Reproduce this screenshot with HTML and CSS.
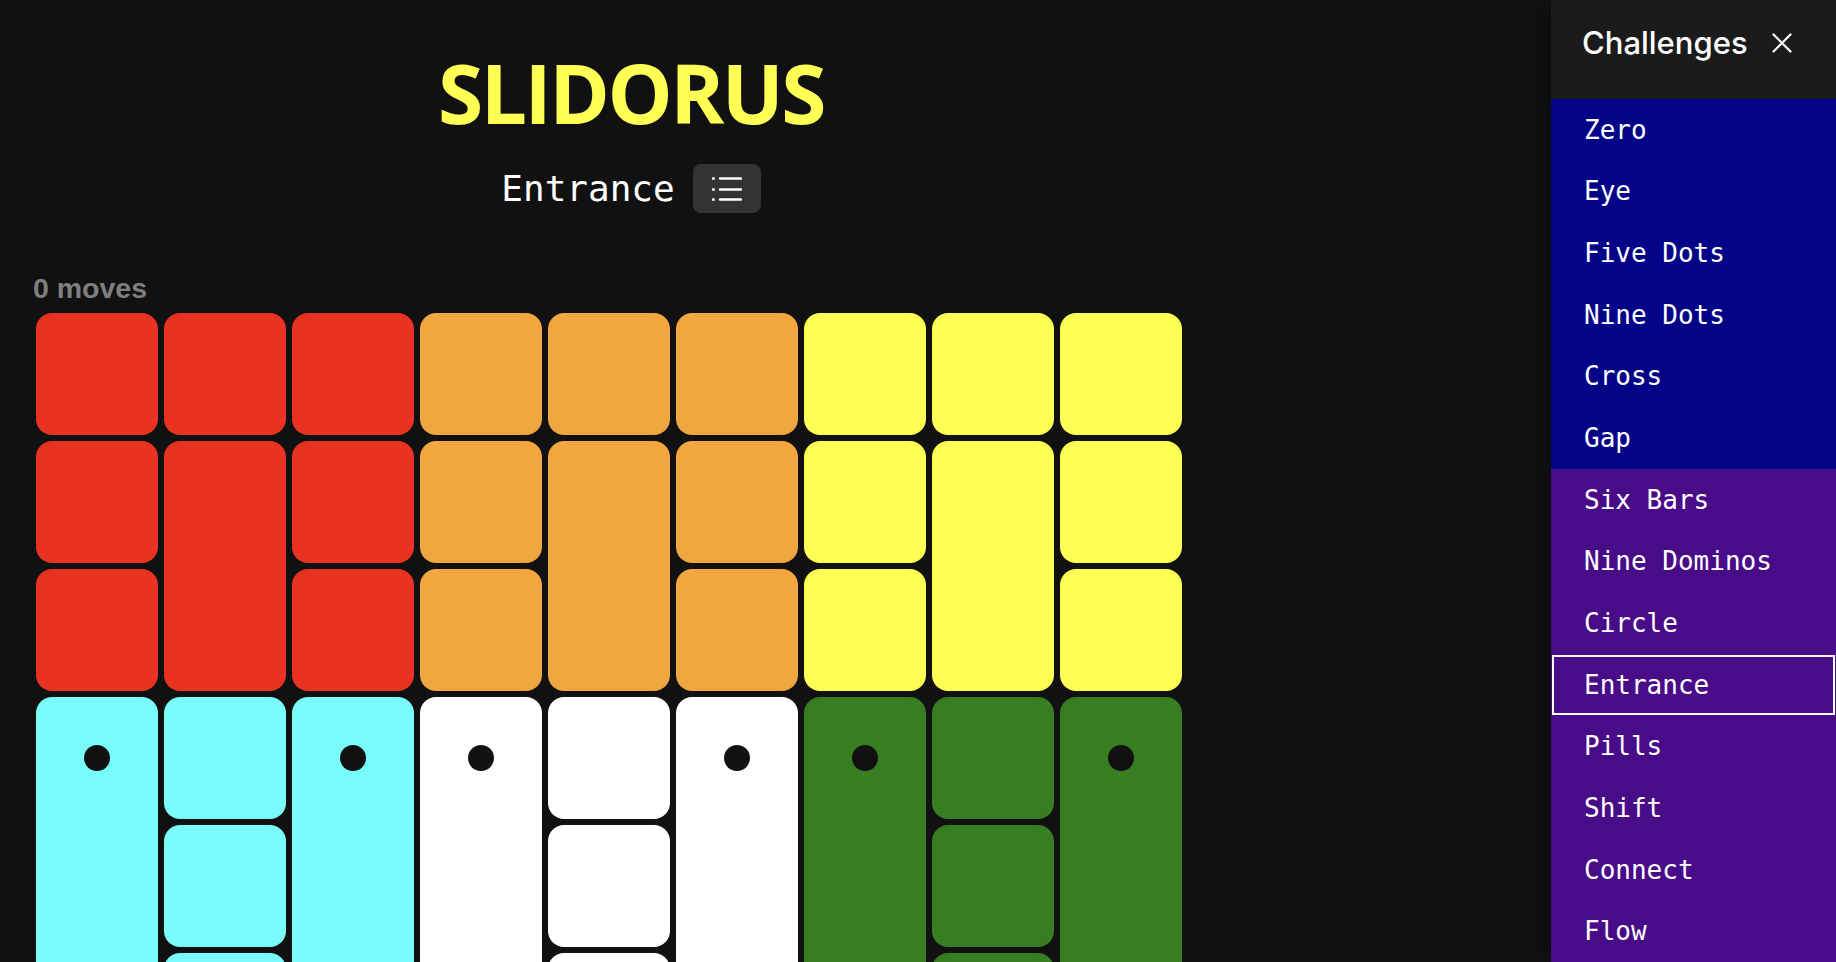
FILE: index.html
```html
<!DOCTYPE html>
<html lang="en">
<head>
<meta charset="utf-8">
<title>Slidorus</title>
<link rel="stylesheet" href="styles.css">
</head>
<body>
<main class="main">
  <header class="header">
    <h1 class="title">SLIDORUS</h1>
    <div class="subtitle">
      <span class="level-name">Entrance</span>
      <button class="list-btn" type="button" aria-label="Challenges">
        <svg width="30" height="24" viewBox="0 0 30 24">
          <g fill="#fff">
            <rect x="0" y="0.2" width="2.8" height="2.6" rx="0.6"/>
            <rect x="0" y="11.2" width="2.8" height="2.6" rx="0.6"/>
            <rect x="0" y="21.2" width="2.8" height="2.6" rx="0.6"/>
          </g>
          <g stroke="#fff" stroke-width="2.4" stroke-linecap="round">
            <line x1="8" y1="1.5" x2="29" y2="1.5"/>
            <line x1="8" y1="12.5" x2="29" y2="12.5"/>
            <line x1="8" y1="22.5" x2="29" y2="22.5"/>
          </g>
        </svg>
      </button>
    </div>
  </header>
  <div class="moves">0 moves</div>
  <div class="board">
    <div class="tile red"></div>
    <div class="tile red"></div>
    <div class="tile red"></div>
    <div class="tile orange"></div>
    <div class="tile orange"></div>
    <div class="tile orange"></div>
    <div class="tile yellow"></div>
    <div class="tile yellow"></div>
    <div class="tile yellow"></div>

    <div class="tile red c1 r2"></div>
    <div class="tile red c1 r3"></div>
    <div class="tile red c2 r2 tall2"></div>
    <div class="tile red c3 r2"></div>
    <div class="tile red c3 r3"></div>
    <div class="tile orange c4 r2"></div>
    <div class="tile orange c4 r3"></div>
    <div class="tile orange c5 r2 tall2"></div>
    <div class="tile orange c6 r2"></div>
    <div class="tile orange c6 r3"></div>
    <div class="tile yellow c7 r2"></div>
    <div class="tile yellow c7 r3"></div>
    <div class="tile yellow c8 r2 tall2"></div>
    <div class="tile yellow c9 r2"></div>
    <div class="tile yellow c9 r3"></div>

    <div class="tile cyan c1 r4 tall3"><span class="dot"></span></div>
    <div class="tile cyan c2 r4"></div>
    <div class="tile cyan c2 r5"></div>
    <div class="tile cyan c2 r6"></div>
    <div class="tile cyan c3 r4 tall3"><span class="dot"></span></div>
    <div class="tile white c4 r4 tall3"><span class="dot"></span></div>
    <div class="tile white c5 r4"></div>
    <div class="tile white c5 r5"></div>
    <div class="tile white c5 r6"></div>
    <div class="tile white c6 r4 tall3"><span class="dot"></span></div>
    <div class="tile green c7 r4 tall3"><span class="dot"></span></div>
    <div class="tile green c8 r4"></div>
    <div class="tile green c8 r5"></div>
    <div class="tile green c8 r6"></div>
    <div class="tile green c9 r4 tall3"><span class="dot"></span></div>
  </div>
</main>
<aside class="sidebar">
  <div class="side-head">
    <span class="side-title">Challenges</span>
    <svg class="close" width="20" height="20" viewBox="0 0 20 20">
      <path d="M1.5 1.5 L18.5 18.5 M18.5 1.5 L1.5 18.5" stroke="#fff" stroke-width="2.2" stroke-linecap="round" fill="none"/>
    </svg>
  </div>
  <ul class="list">
    <li class="item blue">Zero</li>
    <li class="item blue">Eye</li>
    <li class="item blue">Five Dots</li>
    <li class="item blue">Nine Dots</li>
    <li class="item blue">Cross</li>
    <li class="item blue">Gap</li>
    <li class="item purple">Six Bars</li>
    <li class="item purple">Nine Dominos</li>
    <li class="item purple">Circle</li>
    <li class="item purple active">Entrance</li>
    <li class="item purple">Pills</li>
    <li class="item purple">Shift</li>
    <li class="item purple">Connect</li>
    <li class="item purple">Flow</li>
  </ul>
</aside>
</body>
</html>
```

FILE: styles.css
```css
* { box-sizing: border-box; }
html, body { height: 100%; }
body {
  margin: 0;
  background: #111111;
  color: #fff;
  display: flex;
  overflow: hidden;
  font-family: "Liberation Sans", Arial, sans-serif;
}
.main {
  flex: 1;
  padding-left: 33px;
  min-width: 0;
}
.header {
  width: 1196px;
  text-align: center;
  padding-top: 50px;
}
.title {
  margin: 0;
  font-family: "Open Sans", "Noto Sans", sans-serif;
  font-weight: 700;
  font-size: 82px;
  line-height: 84px;
  color: #ffff55;
  letter-spacing: -2.5px;
}
.subtitle {
  margin-top: 30px;
  display: flex;
  justify-content: center;
  align-items: center;
  gap: 18px;
  height: 49px;
}
.level-name {
  font-family: "DejaVu Sans Mono", monospace;
  font-size: 36px;
  color: #fff;
}
.list-btn {
  width: 68px;
  height: 49px;
  border: 0;
  border-radius: 8px;
  background: #333333;
  display: flex;
  align-items: center;
  justify-content: center;
  padding: 0;
}
.list-btn svg { display: block; }
.moves {
  margin-top: 59px;
  font-family: "Liberation Sans", Arial, sans-serif;
  font-weight: 700;
  font-size: 28.5px;
  line-height: 32px;
  color: #7f7f7f;
}
.board {
  margin-top: 6px;
  padding: 3px;
  display: grid;
  grid-template-columns: repeat(9, 122px);
  grid-auto-rows: 122px;
  gap: 6px;
  width: max-content;
}
.tile {
  border-radius: 16px;
  display: flex;
  justify-content: center;
  padding-top: 48px;
}
.c1 { grid-column: 1; }
.c2 { grid-column: 2; }
.c3 { grid-column: 3; }
.c4 { grid-column: 4; }
.c5 { grid-column: 5; }
.c6 { grid-column: 6; }
.c7 { grid-column: 7; }
.c8 { grid-column: 8; }
.c9 { grid-column: 9; }
.r2 { grid-row: 2; }
.r3 { grid-row: 3; }
.r4 { grid-row: 4; }
.r5 { grid-row: 5; }
.r6 { grid-row: 6; }
.r2.tall2 { grid-row: 2 / span 2; }
.r4.tall3 { grid-row: 4 / span 3; }
.red { background: #e83323; }
.orange { background: #f1a73f; }
.yellow { background: #ffff55; }
.cyan { background: #78fcfc; }
.white { background: #ffffff; }
.green { background: #377d22; }
.dot {
  width: 26px;
  height: 26px;
  border-radius: 50%;
  background: #111111;
}
.sidebar {
  width: 285px;
  flex: none;
  background: #1b1b1b;
  box-shadow: 0 0 22px rgba(0, 0, 0, 0.45);
  height: 100%;
}
.side-head {
  height: 99px;
  padding: 23px 0 0 31px;
  display: flex;
  gap: 24px;
  align-items: flex-start;
}
.side-title {
  font-family: "Inter", "Liberation Sans", sans-serif;
  font-weight: 500;
  font-size: 31px;
  line-height: 39px;
  color: #fff;
}
.close {
  display: block;
  margin-top: 10px;
}
.list {
  list-style: none;
  margin: 0;
  padding: 0;
}
.item {
  height: 61.67px;
  padding-left: 33px;
  display: flex;
  align-items: center;
  font-family: "DejaVu Sans Mono", monospace;
  font-size: 26px;
  color: #fff;
}
.item.blue { background: #040489; }
.item.purple { background: #490c89; }
.item.active {
  outline: 2px solid #fff;
  outline-offset: -3px;
}
```
